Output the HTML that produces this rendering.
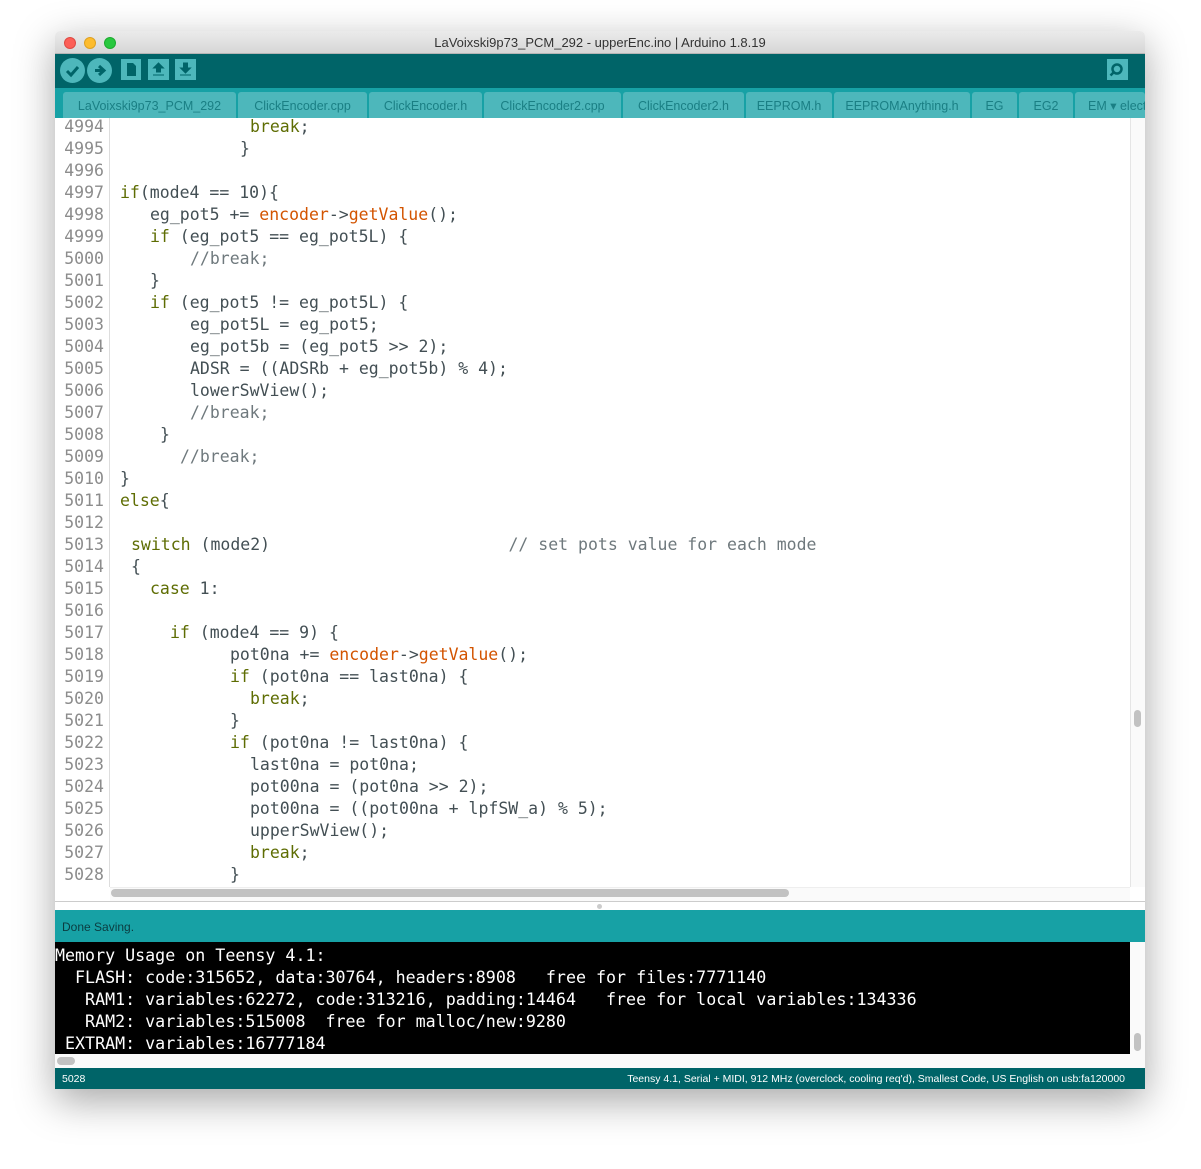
<!DOCTYPE html>
<html><head><meta charset="utf-8"><style>
*{margin:0;padding:0;box-sizing:border-box}
body{width:1201px;height:1169px;background:#fff;position:relative;overflow:hidden;font-family:"Liberation Sans",sans-serif}
.win{position:absolute;left:55px;top:31px;width:1090px;height:1058px;box-shadow:0 12px 40px rgba(0,0,0,.35);background:#fff;border-radius:5px 5px 0 0;overflow:hidden}
.title{position:absolute;left:0;top:0;width:1090px;height:23px;background:linear-gradient(#ebebeb,#d6d6d6);border-bottom:1px solid #b5b5b5;text-align:center;font-size:13px;line-height:24px;color:#333}
.dot{position:absolute;top:6px;width:12px;height:12px;border-radius:50%}
.tb{position:absolute;left:0;top:23px;width:1090px;height:34px;background:#006468}
.ic{position:absolute;background:#4db7bb}
.tabs{position:absolute;left:0;top:57px;width:1090px;height:30px;background:#17a1a5}
.tab{position:absolute;top:4px;height:26px;background:#4db7bb;border-radius:3px 3px 0 0;color:#1a7f84;font-size:12.5px;text-align:center;line-height:28px;white-space:nowrap;overflow:hidden}
.ed{position:absolute;left:0;top:87px;width:1090px;height:792px;background:#fff}
.gut{position:absolute;left:0;top:0;width:55px;height:769px;background:#fff;border-right:1px solid #ddd}
.ln{position:absolute;font-family:"DejaVu Sans Mono","Liberation Mono",monospace;font-size:16.5px;line-height:22px;white-space:pre;color:#434f54}
.n{left:8px;color:#8c8c8c;width:42px;text-align:right}
.k{color:#5e6d03}.o{color:#d35400}.c{color:#6f797d}
.con{position:absolute;left:0;top:911px;width:1075px;height:112px;background:#000;color:#fff;font-family:"DejaVu Sans Mono","Liberation Mono",monospace;font-size:16.65px;line-height:22px;white-space:pre;padding-top:3px}
</style></head><body>
<div class="win">
<div class="title">LaVoixski9p73_PCM_292 - upperEnc.ino | Arduino 1.8.19
<div class="dot" style="left:9px;background:#fc5f57;border:1px solid #de4a43"></div>
<div class="dot" style="left:29px;background:#fdbc2e;border:1px solid #dea122"></div>
<div class="dot" style="left:49px;background:#28c83f;border:1px solid #1dab2f"></div>
</div>
<div class="tb">
<div class="ic" style="left:5px;top:4px;width:25px;height:25px;border-radius:50%"></div>
<svg style="position:absolute;left:5px;top:4px" width="25" height="25"><path d="M7 13l4 4 7-8" stroke="#006468" stroke-width="3" fill="none"/></svg>
<div class="ic" style="left:32px;top:4px;width:25px;height:25px;border-radius:50%"></div>
<svg style="position:absolute;left:32px;top:4px" width="25" height="25"><path d="M8 12.5h7M12 8l5 4.5-5 4.5" stroke="#006468" stroke-width="3" fill="none"/></svg>
<div class="ic" style="left:66px;top:5px;width:20px;height:21px"></div>
<svg style="position:absolute;left:66px;top:5px" width="20" height="21"><path d="M6 4h6l3 3v10H6z" fill="#006468"/></svg>
<div class="ic" style="left:93px;top:5px;width:21px;height:21px"></div>
<svg style="position:absolute;left:93px;top:5px" width="21" height="21"><path d="M10.5 4l5 5h-3v4h-4V9h-3z M5 16h11" stroke="#006468" fill="#006468"/></svg>
<div class="ic" style="left:120px;top:5px;width:21px;height:21px"></div>
<svg style="position:absolute;left:120px;top:5px" width="21" height="21"><path d="M10.5 14l5-5h-3V4h-4v5h-3z M5 16h11" stroke="#006468" fill="#006468"/></svg>
<div class="ic" style="left:1052px;top:5px;width:21px;height:21px"></div>
<svg style="position:absolute;left:1052px;top:5px" width="21" height="21"><circle cx="10" cy="10" r="4.5" stroke="#006468" stroke-width="2.5" fill="none"/><path d="M6.5 13.5l-3 3" stroke="#006468" stroke-width="2.5"/></svg>
</div>
<div class="tabs">
<div class="tab" style="left:8px;width:173px">LaVoixski9p73_PCM_292</div>
<div class="tab" style="left:183px;width:129px">ClickEncoder.cpp</div>
<div class="tab" style="left:314px;width:113px">ClickEncoder.h</div>
<div class="tab" style="left:429px;width:137px">ClickEncoder2.cpp</div>
<div class="tab" style="left:568px;width:121px">ClickEncoder2.h</div>
<div class="tab" style="left:691px;width:86px">EEPROM.h</div>
<div class="tab" style="left:779px;width:136px">EEPROMAnything.h</div>
<div class="tab" style="left:917px;width:45px">EG</div>
<div class="tab" style="left:964px;width:54px">EG2</div>
<div class="tab" style="left:1020px;width:70px;text-align:left;padding-left:13px">EM &#9662; elect</div>
</div>
<div class="ed">
<div class="gut"></div>
<div style="position:absolute;left:1075px;top:0;width:15px;height:769px;background:#fafafa;border-left:1px solid #e5e5e5"></div>
<div style="position:absolute;left:1079px;top:592px;width:7px;height:17px;border-radius:4px;background:#c2c2c2"></div>
<div style="position:absolute;left:55px;top:769px;width:1020px;height:14px;background:#fafafa;border-top:1px solid #eee"></div>
<div style="position:absolute;left:56px;top:771px;width:678px;height:8px;border-radius:4px;background:#c2c2c2"></div>
<div style="position:absolute;left:0;top:783px;width:1090px;height:1px;background:#ccc"></div>
<div style="position:absolute;left:542px;top:786px;width:5px;height:5px;border-radius:50%;background:#ccc"></div>
</div>
<div style="position:absolute;left:0;top:879px;width:1090px;height:32px;background:#17a1a5;color:#0b3c40;font-size:12px;line-height:34px;padding-left:7px">Done Saving.</div>
<div class="con">Memory Usage on Teensy 4.1:
  FLASH: code:315652, data:30764, headers:8908   free for files:7771140
   RAM1: variables:62272, code:313216, padding:14464   free for local variables:134336
   RAM2: variables:515008  free for malloc/new:9280
 EXTRAM: variables:16777184</div>
<div style="position:absolute;left:1075px;top:911px;width:15px;height:112px;background:#fafafa"></div>
<div style="position:absolute;left:1079px;top:1002px;width:7px;height:18px;border-radius:4px;background:#c2c2c2"></div>
<div style="position:absolute;left:0;top:1023px;width:1090px;height:14px;background:#fafafa"></div>
<div style="position:absolute;left:2px;top:1026px;width:18px;height:8px;border-radius:4px;background:#c2c2c2"></div>
<div style="position:absolute;left:0;top:1037px;width:1090px;height:21px;background:#006468;color:#fff;font-size:10.5px;line-height:23px">
<span style="position:absolute;left:7px">5028</span><span style="position:absolute;right:20px">Teensy 4.1, Serial + MIDI, 912 MHz (overclock, cooling req'd), Smallest Code, US English on usb:fa120000</span></div>
</div>
<div id="lines"></div>
<script>
var L=[
[250,'<span class="k">break</span>;'],[240,'}'],[0,''],
[120,'<span class="k">if</span>(mode4 == 10){'],
[150,'eg_pot5 += <span class="o">encoder</span>-&gt;<span class="o">getValue</span>();'],
[150,'<span class="k">if</span> (eg_pot5 == eg_pot5L) {'],
[190,'<span class="c">//break;</span>'],[150,'}'],
[150,'<span class="k">if</span> (eg_pot5 != eg_pot5L) {'],
[190,'eg_pot5L = eg_pot5;'],[190,'eg_pot5b = (eg_pot5 &gt;&gt; 2);'],
[190,'ADSR = ((ADSRb + eg_pot5b) % 4);'],[190,'lowerSwView();'],
[190,'<span class="c">//break;</span>'],[160,'}'],[180,'<span class="c">//break;</span>'],
[120,'}'],[120,'<span class="k">else</span>{'],[0,''],
[131,'<span class="k">switch</span> (mode2)                        <span class="c">// set pots value for each mode</span>'],
[131,'{'],[150,'<span class="k">case</span> 1:'],[0,''],
[170,'<span class="k">if</span> (mode4 == 9) {'],
[230,'pot0na += <span class="o">encoder</span>-&gt;<span class="o">getValue</span>();'],
[230,'<span class="k">if</span> (pot0na == last0na) {'],[250,'<span class="k">break</span>;'],[230,'}'],
[230,'<span class="k">if</span> (pot0na != last0na) {'],[250,'last0na = pot0na;'],
[250,'pot00na = (pot0na &gt;&gt; 2);'],[250,'pot00na = ((pot00na + lpfSW_a) % 5);'],
[250,'upperSwView();'],[250,'<span class="k">break</span>;'],[230,'}']];
var h='';
for(var i=0;i<L.length;i++){var t=116+22*i;
h+='<div class="ln n" style="top:'+t+'px;left:56px;width:48px">'+(4994+i)+'</div>';
if(L[i][1])h+='<div class="ln" style="top:'+t+'px;left:'+L[i][0]+'px">'+L[i][1]+'</div>';}
var d=document.getElementById('lines');d.innerHTML=h;
d.style.cssText='position:absolute;left:0;top:0;width:1201px;height:886px;clip-path:inset(118px 0 0 0)';
</script>
</body></html>
